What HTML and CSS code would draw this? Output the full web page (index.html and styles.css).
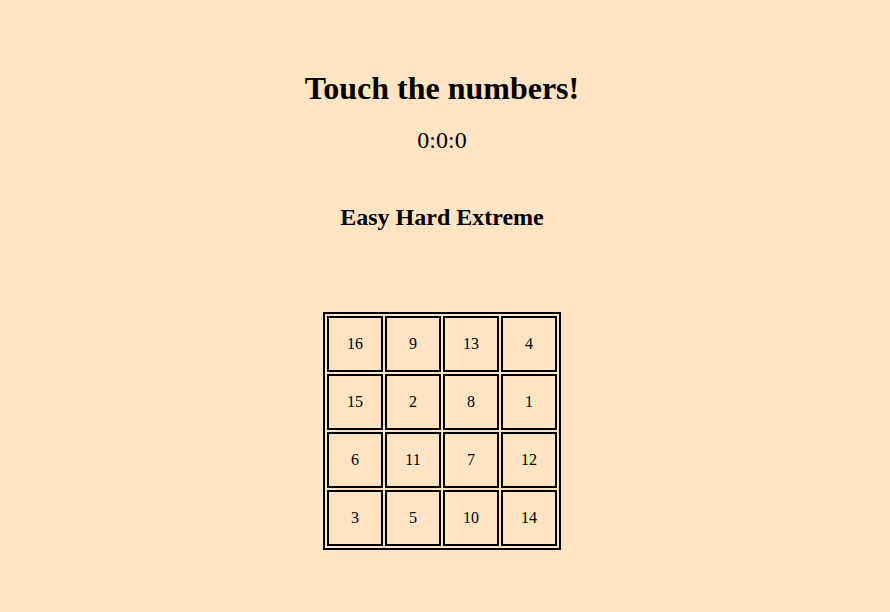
FILE: index.html
```html
<!DOCTYPE html>
<html>
<head>
<meta charset="utf-8">
<title>Touch the numbers</title>
<link rel="stylesheet" href="styles.css">
</head>
<body>
<main class="game">
  <h1 class="title">Touch the numbers!</h1>
  <div class="timer">0:0:0</div>
  <h2 class="levels">Easy Hard Extreme</h2>
  <table class="board">
    <tr><td>16</td><td>9</td><td>13</td><td>4</td></tr>
    <tr><td>15</td><td>2</td><td>8</td><td>1</td></tr>
    <tr><td>6</td><td>11</td><td>7</td><td>12</td></tr>
    <tr><td>3</td><td>5</td><td>10</td><td>14</td></tr>
  </table>
</main>
</body>
</html>
```

FILE: styles.css
```css
html, body {
  margin: 0;
  padding: 0;
  background: #ffe4c4;
  color: #000;
  font-family: "Liberation Serif", "Times New Roman", serif;
}
.game {
  display: flex;
  flex-direction: column;
  align-items: center;
  padding: 70px 6px 0 0;
  text-align: center;
}
.title {
  margin: 0;
  font-size: 32px;
  line-height: 37px;
  font-weight: bold;
}
.timer {
  margin-top: 19px;
  font-size: 24px;
  line-height: 28px;
}
.levels {
  margin: 49px 0 0;
  font-size: 24px;
  line-height: 28px;
  font-weight: bold;
}
.board {
  margin-top: 81px;
  border: 2px solid #000;
  border-spacing: 2px;
}
.board td {
  width: 52px;
  height: 52px;
  padding: 0;
  border: 2px solid #000;
  text-align: center;
  vertical-align: middle;
  font-size: 16px;
}
```
